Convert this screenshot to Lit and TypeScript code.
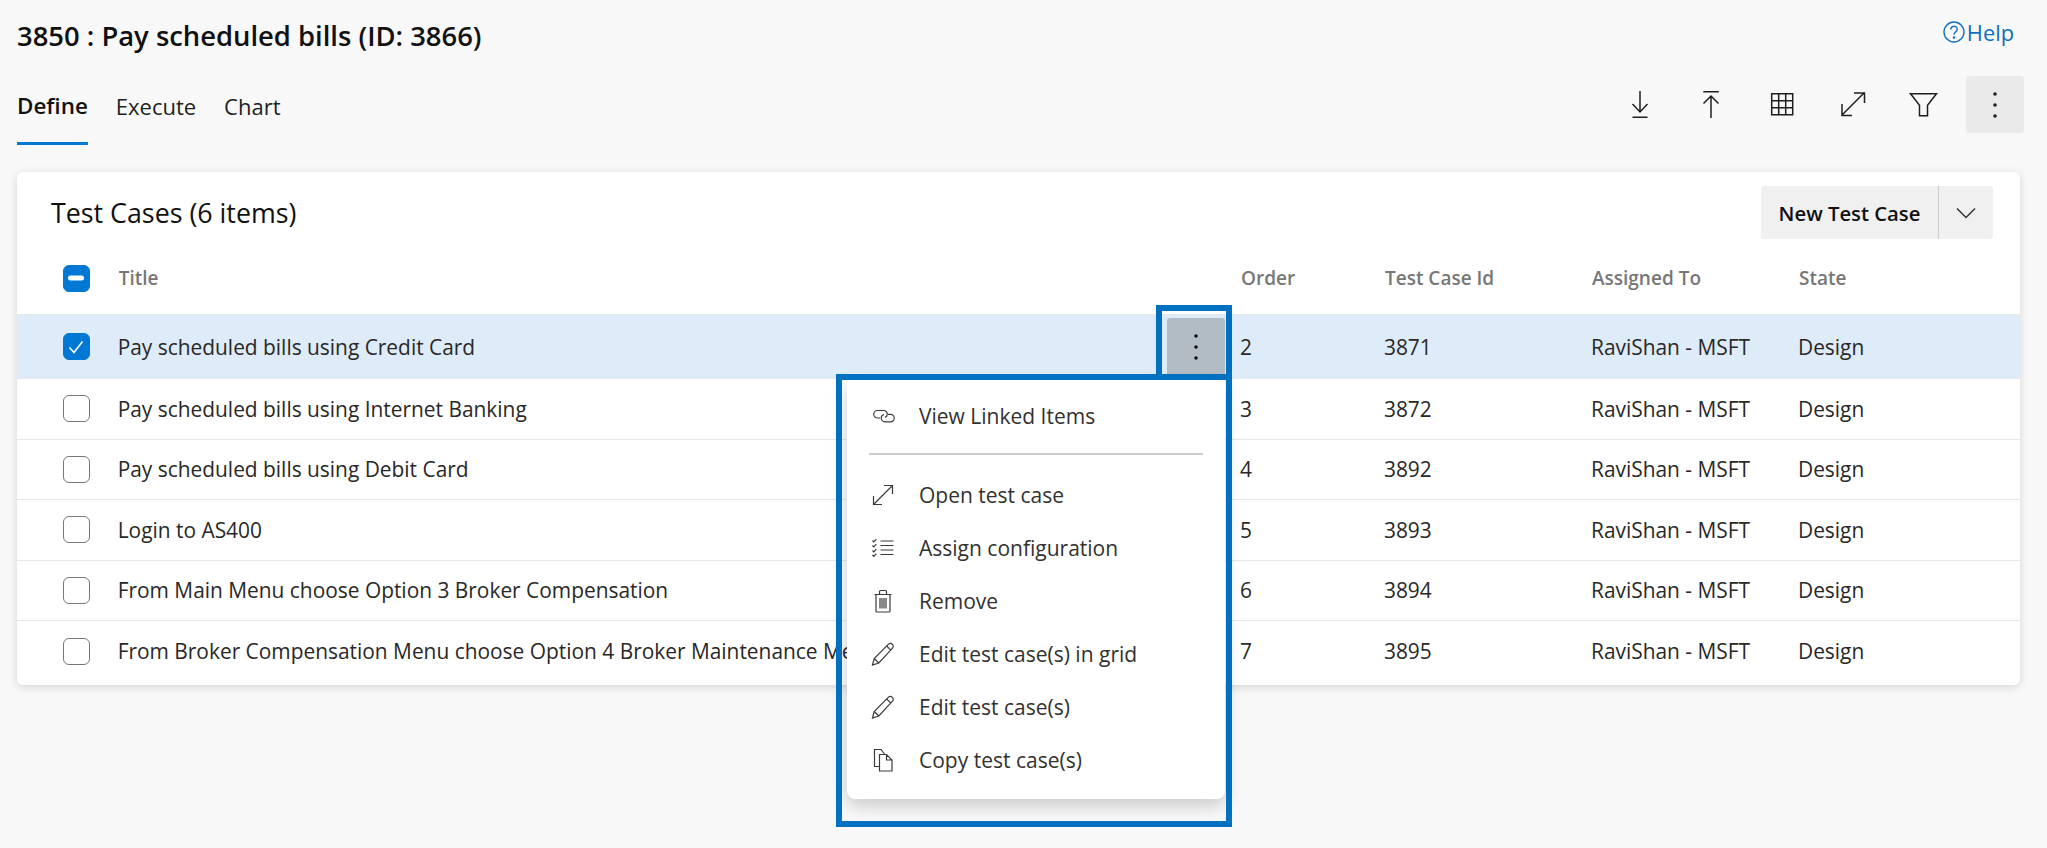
import { LitElement, html, css, svg } from "lit";
import { customElement } from "lit/decorators.js";

const rows = [
  ["Pay scheduled bills using Credit Card", "2", "3871"],
  ["Pay scheduled bills using Internet Banking", "3", "3872"],
  ["Pay scheduled bills using Debit Card", "4", "3892"],
  ["Login to AS400", "5", "3893"],
  ["From Main Menu choose Option 3 Broker Compensation", "6", "3894"],
  ["From Broker Compensation Menu choose Option 4 Broker Maintenance Menu", "7", "3895"],
];

const tool = (body: unknown) => html`<button class="tool"><svg width="58" height="57" viewBox="0 0 58 57" fill="none" stroke="#201f1e" stroke-width="1.5">${body}</svg></button>`;

const toolbar = [
  svg`<path d="M29 15v21M21.5 28l7.5 8 7.5-8M21.5 41.2h15"/>`,
  svg`<path d="M21.3 15.7h15.5M29 20.5v21.5M21.5 27.5l7.5-7.5 7.5 7.5"/>`,
  svg`<path d="M18.7 17.7h21v21h-21zM25.7 17.7v21M32.7 17.7v21M18.7 24.7h21M18.7 31.7h21"/>`,
  svg`<path d="M18 39l22-22M30 17h10.5v10M18 28v11.5h10"/>`,
  svg`<path d="M15.5 17.7h26l-9 11.5v10.5h-8V29.200z"/>`,
];

const ico = (body: unknown) => html`<svg class="mi" width="24" height="24" viewBox="0 0 24 24" fill="none" stroke="#3a3a3a" stroke-width="1.2">${body}</svg>`;
const pencil = svg`<path d="M1.500 23l1.700-6.500L17.500 2.200c1-1 2.800-1 3.900.1s1.100 2.900.1 3.900L7.800 21zM3.200 16.500l4.600 4.500M15.700 4l4.300 4.300"/>`;
const menu = [
  ["Open test case", svg`<path d="M3 21L21 3M13 2.500h8.500V11M2.500 13v8.500H11"/>`],
  ["Assign configuration", svg`<path d="M9.500 5h13M9.500 9.500h13M9.500 14h13M9.500 18.500h13M1.500 4.500l1.300 1.300 2.500-2.600M1.500 9.500l1.300 1.300 2.500-2.600M1.500 14.500l1.300 1.300 2.500-2.600M1.500 19l1.300 1.300 2.500-2.600"/>`],
  ["Remove", svg`<path d="M3.500 5.500h17M5 5.500V22c0 .5.500 1 1 1h12c.5 0 1-.5 1-1V5.500M8.500 5.500V2.500c0-.5.500-1 1-1h5c.5 0 1 .5 1 1v3M9 9v10.500M11 9v10.500M13 9v10.500M15 9v10.500"/>`],
  ["Edit test case(s) in grid", pencil],
  ["Edit test case(s)", pencil],
  ["Copy test case(s)", svg`<path d="M8.500 18.500H3.500V1.500H10l3.500 4.500M8.500 6.500h7l5.500 5.500v11H8.500zM15.500 6.500V12H21"/>`],
];

const dots = (fill: string) => html`<svg width="6" height="28" viewBox="0 0 6 28" fill="${fill}"><circle cx="3" cy="3" r="1.800"/><circle cx="3" cy="14" r="1.800"/><circle cx="3" cy="25" r="1.800"/></svg>`;

@customElement("app-root")
export class AppRoot extends LitElement {
  static styles = css`
    :host {
      display: block;
      position: relative;
      height: 848px;
      overflow: hidden;
      background: #f8f8f8;
      font-family: "Open Sans", "Noto Sans", sans-serif;
      color: #201f1e;
      box-sizing: border-box;
      padding: 20px 23px 0 17px;
    }
    .top { display: flex; justify-content: space-between; height: 56px; }
    h1 { margin: 0; font-size: 27.400px; line-height: 32px; font-weight: 600; color: #111; }
    .help { display: flex; align-items: center; gap: 2px; height: 24px; margin-right: 10px; color: #106ebe; font-size: 21.800px; }
    .nav { display: flex; justify-content: space-between; height: 69px; }
    .tabs { display: flex; gap: 28px; font-size: 22px; line-height: 26px; }
    .tab { padding: 17px 0 23px; height: 26px; }
    .tab.on { font-size: 22.400px; font-weight: 600; border-bottom: 3px solid #0078d4; color: #111; }
    .tools { display: flex; gap: 13px; height: 57px; }
    button.tool { width: 58px; height: 57px; padding: 0; border: 0; border-radius: 3px; background: transparent; display: flex; align-items: center; justify-content: center; }
    button.tool.more { background: #eaeaea; }
    .card { margin: 27px 4px 0 0; background: #fff; border-radius: 6px; box-shadow: 0 2px 10px rgba(0,0,0,.14); }
    .head { display: flex; justify-content: space-between; align-items: center; padding: 14px 27px 0 34px; height: 53px; }
    h2 { margin: 0; font-size: 26.800px; font-weight: 400; color: #111; }
    .split { display: flex; height: 53px; background: #f0f0f0; border-radius: 3px; font-size: 20.300px; font-weight: 600; color: #111; align-items: stretch; }
    .split .main { width: 177px; display: flex; align-items: center; justify-content: center; border-right: 1.5px solid #ccc; }
    .split .drop { flex: 1; width: 54px; display: flex; align-items: center; justify-content: center; }
    .grid { display: grid; grid-template-columns: 100.700px 1122.300px 144px 207px 207px 1fr; align-items: center; font-size: 20.900px; white-space: nowrap; }
    .colhead { height: 72px; padding-top: 3px; color: #777; font-weight: 600; font-size: 19px; }
    .colhead > span { padding-left: 1px; }
    .row { height: 59.500px; border-top: 1px solid #e8e8e8; box-sizing: content-box; color: #292827; }
    .row.sel { height: 63px; background: #deebf8; }
    .row.last { height: 60px; padding-bottom: 4px; }
    .cbc { padding-left: 45.500px; display: flex; }
    .cb { width: 27px; height: 27px; box-sizing: border-box; border-radius: 6px; border: 1.5px solid #777; background: #fff; display: flex; align-items: center; justify-content: center; }
    .cb.on { background: #0078d4; border-color: #0078d4; }
    .tt { display: flex; justify-content: space-between; align-items: center; padding-right: 15px; }
    .rbtn { width: 58px; height: 58px; border-radius: 3px; background: #b2bcc4; display: flex; align-items: center; justify-content: center; }
    .menu { position: absolute; left: 847px; top: 380px; width: 378px; box-sizing: border-box; padding: 9px 0 12px; background: #fff; border-radius: 0 0 8px 8px; box-shadow: 0 6px 18px rgba(0,0,0,.2); font-size: 21px; color: #323130; }
    .mitem { height: 53px; display: flex; align-items: center; }
    .mi { margin: 0 24px 0 24px; flex: none; }
    .link { margin: 0 23px 0 25px; }
    .sep { height: 1.500px; margin: 11px 22px 14px; background: #ccc; }
    .mark { position: absolute; border: 6px solid #0070c0; box-sizing: border-box; }
    .mark.a { left: 1156px; top: 305px; width: 76px; height: 75px; }
    .mark.b { left: 836px; top: 374px; width: 396px; height: 453px; }
  `;

  render() {
    return html`
      <div class="top">
        <h1>3850 : Pay scheduled bills (ID: 3866)</h1>
        <div class="help">
          <svg width="22" height="22" viewBox="0 0 22 22" fill="none" stroke="#106ebe" stroke-width="1.4"><circle cx="11" cy="11" r="10"/><path d="M7.800 8.500c0-4.200 6.400-4.200 6.400-.2 0 2.700-3.200 2.700-3.200 5.400"/><circle cx="11" cy="16.500" r=".6"/></svg>
          <span>Help</span>
        </div>
      </div>
      <div class="nav">
        <div class="tabs">
          <div class="tab on">Define</div>
          <div class="tab">Execute</div>
          <div class="tab">Chart</div>
        </div>
        <div class="tools">
          ${toolbar.map((t) => tool(t))}
          <button class="tool more">${dots("#201f1e")}</button>
        </div>
      </div>
      <div class="card">
        <div class="head">
          <h2>Test Cases (6 items)</h2>
          <div class="split">
            <div class="main">New Test Case</div>
            <div class="drop"><svg width="20" height="12" viewBox="0 0 20 12" fill="none" stroke="#333" stroke-width="1.500"><path d="M1 1.500l9 9 9-9"/></svg></div>
          </div>
        </div>
        <div class="grid colhead">
          <div class="cbc"><div class="cb on"><svg width="16" height="6" viewBox="0 0 16 6"><rect width="16" height="5" y=".5" rx="2.500" fill="#fff"/></svg></div></div>
          <span>Title</span><span>Order</span><span>Test Case Id</span><span>Assigned To</span><span>State</span>
        </div>
        ${rows.map((r, i) => html`
          <div class="grid row ${i === 0 ? "sel" : ""} ${i === 5 ? "last" : ""}">
            <div class="cbc"><div class="cb ${i === 0 ? "on" : ""}">${i === 0 ? html`<svg width="16" height="14" viewBox="0 0 16 14" fill="none" stroke="#fff" stroke-width="1.600"><path d="M1.500 7.500l4.500 5L14.500 1.500"/></svg>` : ""}</div></div>
            <div class="tt"><span>${r[0]}</span>${i === 0 ? html`<div class="rbtn">${dots("#111")}</div>` : ""}</div>
            <span>${r[1]}</span><span>${r[2]}</span><span>RaviShan - MSFT</span><span>Design</span>
          </div>`)}
      </div>
      <div class="menu">
        <div class="mitem"><svg class="mi link" width="24" height="24" viewBox="0 0 24 24" fill="none" stroke="#3a3a3a" stroke-width="1.2"><path d="M8 14H5.500a3.700 3.700 0 0 1 0-7.500h6a3.700 3.700 0 0 1 3.800 3.700c0 1.500-1 2.600-2.300 3M12 10.500c-1.700.5-2.800 1.800-2.800 3.300a4 4 0 0 0 4 4h5.300a3.700 3.700 0 0 0 0-7.500H16"/></svg><span>View Linked Items</span></div>
        <div class="sep"></div>
        ${menu.map((m) => html`<div class="mitem">${ico(m[1])}<span>${m[0]}</span></div>`)}
      </div>
      <div class="mark a"></div>
      <div class="mark b"></div>
    `;
  }
}
